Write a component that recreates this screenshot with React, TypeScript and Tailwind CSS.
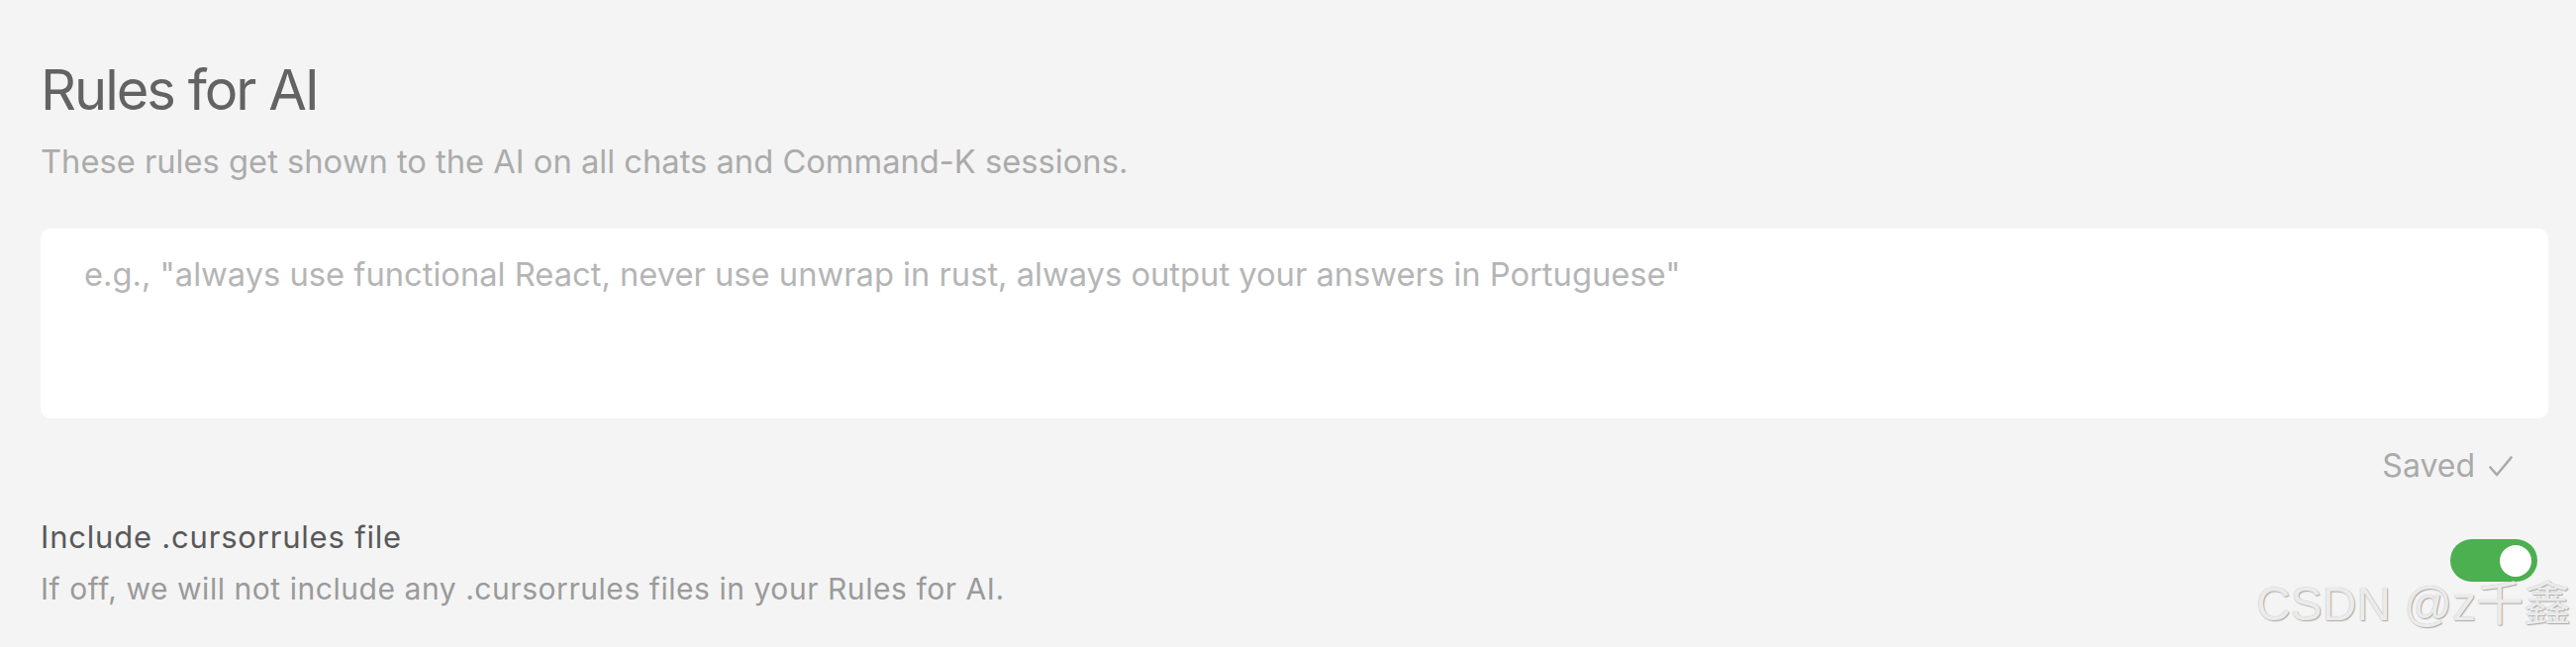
import { useState } from 'react';

export default function App() {
  const [rules, setRules] = useState('');
  const [includeCursorRules, setIncludeCursorRules] = useState(true);

  return (
    <div className="relative min-h-screen bg-[#f4f4f4] pl-[41px] pr-[28px] pt-[59px] font-['Inter',sans-serif] overflow-hidden">
      <h1 className="text-[56px] leading-[64px] font-normal tracking-[-2px] text-[#636363]">Rules for AI</h1>
      <p className="mt-[20px] text-[32.7px] leading-[40px] text-[#ababab]">
        These rules get shown to the AI on all chats and Command-K sessions.
      </p>

      <textarea
        value={rules}
        onChange={(e) => setRules(e.target.value)}
        placeholder={'e.g., "always use functional React, never use unwrap in rust, always output your answers in Portuguese"'}
        className="mt-[48px] block w-full h-[192px] resize-none rounded-[10px] bg-white pt-[26px] pl-[44px] pr-[24px] text-[32.7px] leading-[40px] text-[#333] placeholder:text-[#b5b5b5] outline-none"
      />

      {/* save status */}
      <div className="mt-[28px] flex items-baseline justify-end pr-[36px] text-[32px] leading-[40px] text-[#aaaaaa]">
        <span>Saved</span>
        <svg width="24" height="21" viewBox="0 0 24 21" className="ml-[14px]" fill="none">
          <path d="M1.5 11.5 L8 19 L22.5 1.5" stroke="#aaaaaa" strokeWidth="2.6" strokeLinecap="round" strokeLinejoin="round" />
        </svg>
      </div>

      <div className="mt-[32px] flex items-center justify-between pr-[11px]">
        <div>
          <div className="text-[31px] leading-[40px] tracking-[0.8px] text-[#595959]">Include .cursorrules file</div>
          <div className="mt-[13px] text-[30px] leading-[38px] tracking-[0.55px] text-[#9a9a9a]">
            If off, we will not include any .cursorrules files in your Rules for AI.
          </div>
        </div>
        <button
          onClick={() => setIncludeCursorRules(!includeCursorRules)}
          className={`mb-[4px] flex h-[43px] w-[88px] items-center rounded-full px-[6px] ${
            includeCursorRules ? 'justify-end bg-[#4caf50]' : 'justify-start bg-[#cfcfcf]'
          }`}
        >
          <span className="block h-[32px] w-[32px] rounded-full bg-white" />
        </button>
      </div>

      <div className="pointer-events-none absolute right-[5px] top-[587px] font-['Liberation_Sans','Noto_Sans_CJK_SC',sans-serif] text-[48px] leading-[48px] text-[#ebebeb] [text-shadow:1px_1px_1px_#a8a8a8,0_0_1px_#b8b8b8]">
        CSDN @z千鑫
      </div>
    </div>
  );
}
